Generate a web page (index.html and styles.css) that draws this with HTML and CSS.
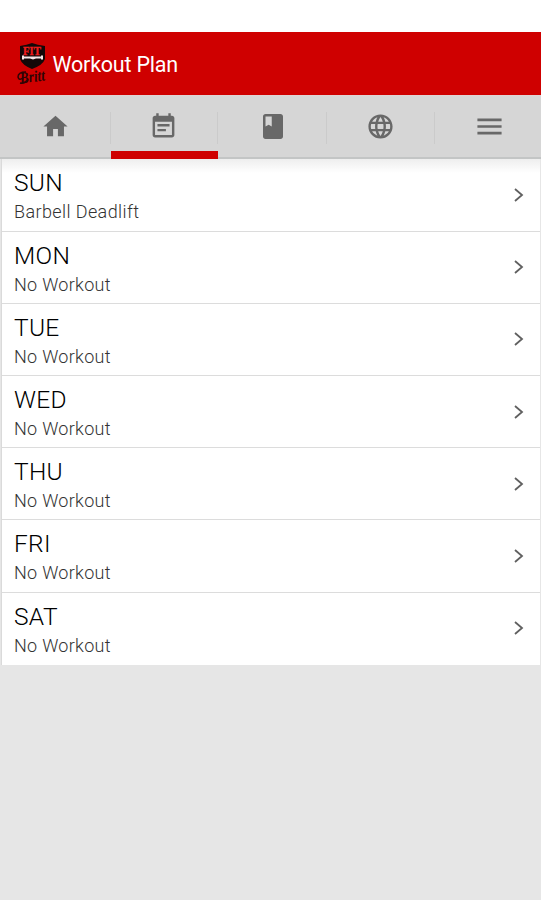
FILE: index.html
```html
<!DOCTYPE html>
<html lang="en">
<head>
<meta charset="utf-8">
<title>Workout Plan</title>
<link rel="stylesheet" href="styles.css">
</head>
<body>
<header class="bar">
  <svg class="logo" viewBox="0 0 32 46" aria-label="Fit Britt">
    <path class="shield" d="M4 4Q11 3 16 1Q21 3 29 4V17Q27 23 16 27Q6 23 4 17Z"/>
    <text class="logo-fit" x="7" y="13" textLength="18" lengthAdjust="spacingAndGlyphs">FIT</text>
    <path class="barbell" d="M6 13.500h2v1h17v-1h2v4h-2v-1h-5l-3 1-3-1H8v1H6z"/>
    <text class="logo-script" x="4" y="40" textLength="25" lengthAdjust="spacingAndGlyphs" transform="rotate(-7 16 36)">Britt</text>
    <path class="swash" d="M10 30Q2 30 2 35Q3 39 7 36M4 41Q9 42 12 37"/>
  </svg>
  <h1 class="title">Workout Plan</h1>
</header>
<nav class="tabs">
  <a class="tab"><svg viewBox="0 0 24 24"><path d="M10 20v-6h4v6h5v-8h3L12 3 2 12h3v8z"/></svg></a>
  <a class="tab active"><svg viewBox="0 0 24 24"><path d="M17 10H7v2h10v-2zm2-7h-1V1h-2v2H8V1H6v2H5c-1.11 0-1.99.9-1.99 2L3 19c0 1.1.89 2 2 2h14c1.1 0 2-.9 2-2V5c0-1.1-.9-2-2-2zm0 16H5V8h14v11zm-5-5H7v2h7v-2z"/></svg></a>
  <a class="tab"><svg class="book" viewBox="0 0 24 24"><path d="M18 2H6c-1.1 0-2 .9-2 2v16c0 1.100.9 2 2 2h12c1.100 0 2-.9 2-2V4c0-1.100-.9-2-2-2zM6 4h5v8l-2.500-1.500L6 12V4z"/></svg></a>
  <a class="tab globe"><svg viewBox="0 0 24 24"><path d="M11.990 2C6.470 2 2 6.480 2 12s4.470 10 9.990 10C17.520 22 22 17.520 22 12S17.520 2 11.990 2zm6.930 6h-2.950c-.32-1.250-.78-2.450-1.380-3.560 1.840.63 3.370 1.910 4.330 3.560zM12 4.040c.83 1.200 1.480 2.530 1.910 3.960h-3.820c.43-1.430 1.080-2.760 1.910-3.960zM4.260 14C4.100 13.360 4 12.690 4 12s.1-1.360.26-2h3.380c-.08.66-.14 1.320-.14 2s.06 1.340.14 2H4.260zm.82 2h2.950c.32 1.250.78 2.450 1.380 3.560-1.840-.63-3.370-1.900-4.330-3.560zm2.950-8H5.080c.96-1.660 2.490-2.930 4.330-3.560C8.810 5.550 8.350 6.750 8.030 8zM12 19.960c-.83-1.200-1.480-2.530-1.910-3.960h3.820c-.43 1.430-1.080 2.760-1.910 3.960zM14.340 14H9.660c-.09-.66-.16-1.320-.16-2s.07-1.350.16-2h4.680c.09.65.16 1.320.16 2s-.07 1.340-.16 2zm.25 5.560c.6-1.110 1.060-2.310 1.380-3.560h2.950c-.96 1.650-2.490 2.930-4.330 3.560zM16.360 14c.08-.66.14-1.320.14-2s-.06-1.340-.14-2h3.380c.16.64.26 1.310.26 2s-.1 1.360-.26 2h-3.380z"/></svg></a>
  <a class="tab"><svg viewBox="0 0 24 24"><path d="M2 5.400h20v2.200H2zm0 5.500h20v2.200H2zm0 5.500h20v2.200H2z"/></svg></a>
</nav>
<main class="days">
  <section class="day"><div><h2>SUN</h2><p class="exercise">Barbell Deadlift</p></div><svg viewBox="0 0 10 14"><path d="M1 1l7 6-7 6"/></svg></section>
  <section class="day"><div><h2>MON</h2><p>No Workout</p></div><svg viewBox="0 0 10 14"><path d="M1 1l7 6-7 6"/></svg></section>
  <section class="day"><div><h2>TUE</h2><p>No Workout</p></div><svg viewBox="0 0 10 14"><path d="M1 1l7 6-7 6"/></svg></section>
  <section class="day"><div><h2>WED</h2><p>No Workout</p></div><svg viewBox="0 0 10 14"><path d="M1 1l7 6-7 6"/></svg></section>
  <section class="day"><div><h2>THU</h2><p>No Workout</p></div><svg viewBox="0 0 10 14"><path d="M1 1l7 6-7 6"/></svg></section>
  <section class="day"><div><h2>FRI</h2><p>No Workout</p></div><svg viewBox="0 0 10 14"><path d="M1 1l7 6-7 6"/></svg></section>
  <section class="day"><div><h2>SAT</h2><p>No Workout</p></div><svg viewBox="0 0 10 14"><path d="M1 1l7 6-7 6"/></svg></section>
</main>
</body>
</html>
```
FILE: styles.css
```css
* { box-sizing: border-box; }
html { background: #e6e6e6; }
body {
  margin: 0;
  border-top: 32px solid #fff;
  font-family: Roboto, "Liberation Sans", sans-serif;
}
h1, h2, p { margin: 0; }
.bar {
  height: 63px;
  display: flex;
  align-items: center;
  padding-left: 16px;
  background: #cf0000;
}
.logo { width: 32px; height: 46px; margin-top: 3px; flex: none; overflow: visible; }
.shield { fill: #130808; }
.logo-fit { font: bold 13px "Liberation Serif", serif; fill: #f01c1c; stroke: #f01c1c; stroke-width: .4; }
.barbell { fill: #f5e5e5; }
.logo-script { font: italic bold 16px "Liberation Serif", serif; fill: #300404; }
.swash { fill: none; stroke: #300404; stroke-width: 1.5; }
.title {
  margin: 3px 0 0 4.500px;
  font-size: 21.5px;
  line-height: 28px;
  font-weight: 400;
  letter-spacing: -.22px;
  color: #fff;
}
.tabs {
  display: grid;
  grid-template-columns: 110.5px 107.500px 109px 108px 106px;
  height: 64px;
  background: linear-gradient(#e2d4d4, #d6d6d6 2px);
}
.tab {
  display: flex;
  align-items: center;
  justify-content: center;
  padding-top: 1px;
  border-bottom: 2px solid #c3c5c5;
  background: linear-gradient(#cbcbcb, #cbcbcb) right 17px / 1px 32px no-repeat;
}
.tab:last-child { background: none; padding-left: 2px; }
.tab.globe { padding-right: 2px; }
.tab.active { border-bottom: 8px solid #cf0000; padding: 7px 1px 0 0; }
.tab svg { width: 29px; height: 29px; fill: #686868; }
.tab .book { width: 30px; height: 31px; }
.days {
  margin: 0 1px 0 2px;
  padding-top: .4px;
  background: linear-gradient(#eee, #fff 14px);
  box-shadow: -1px 0 #dadada;
}
.day {
  height: 72.2px;
  display: flex;
  align-items: center;
  justify-content: space-between;
  padding: 0 16px 0 12px;
  border-bottom: 1px solid #dcdcdc;
}
.day:last-child { border-bottom-color: transparent; }
.day div { padding-top: 5px; }
.day h2 {
  font-size: 24.5px;
  line-height: 30px;
  font-weight: 300;
  letter-spacing: .3px;
  color: #000;
}
.day p {
  font-size: 18px;
  line-height: 28px;
  font-weight: 300;
  letter-spacing: .3px;
  color: #333;
}
.day .exercise { letter-spacing: .4px; }
.day svg {
  width: 10px;
  height: 14px;
  fill: none;
  stroke: #606060;
  stroke-width: 1.8;
}
```
